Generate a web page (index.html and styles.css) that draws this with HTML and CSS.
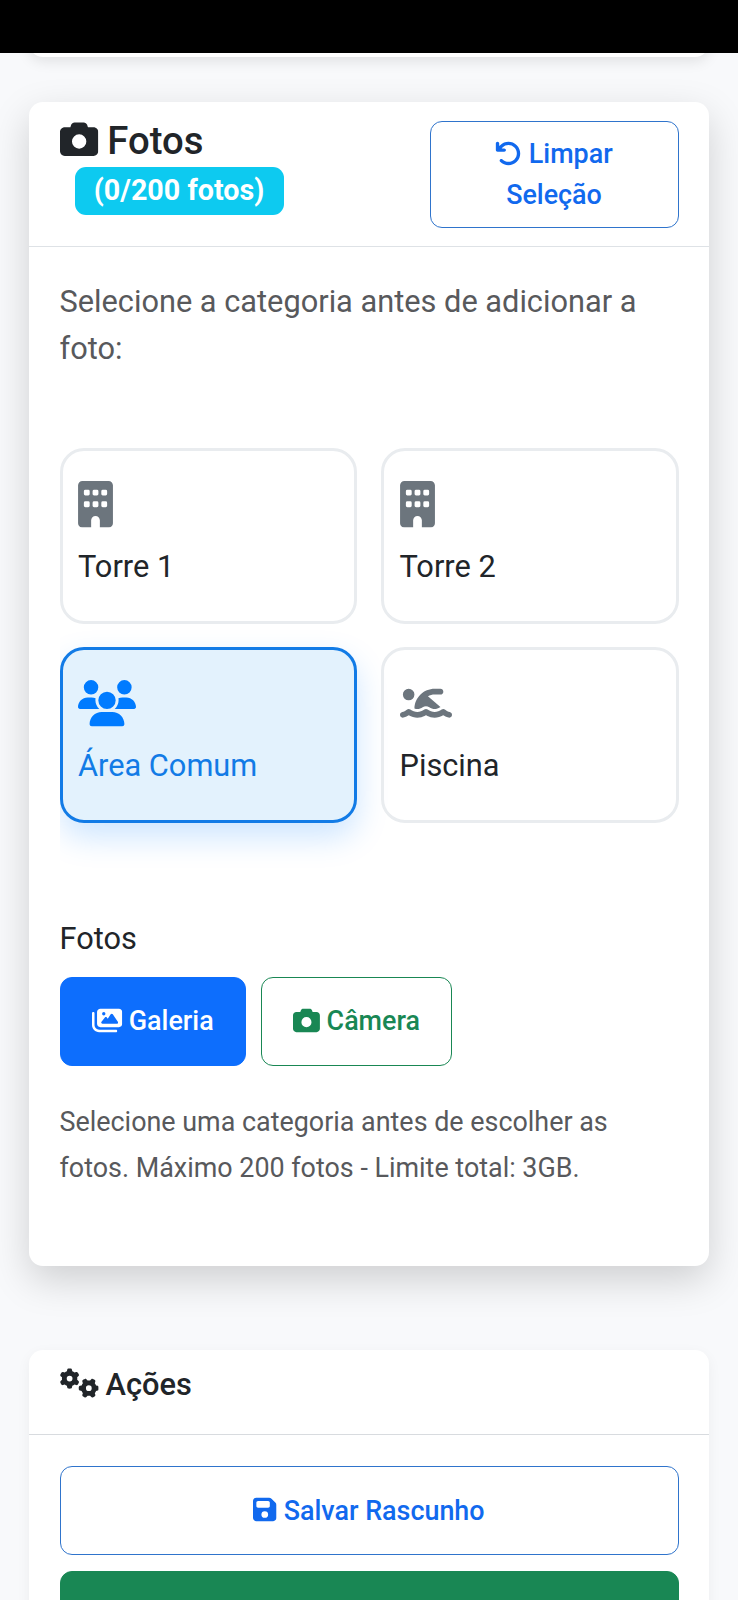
FILE: index.html
```html
<!DOCTYPE html>
<html lang="pt-BR">
<head>
<meta charset="utf-8">
<title>Fotos</title>
<link rel="stylesheet" href="styles.css">
</head>
<body>
<svg class="sprite" aria-hidden="true">
  <symbol id="camera" viewBox="0 0 512 512"><path d="M149.1 64.8L138.7 96H64C28.7 96 0 124.7 0 160V416c0 35.3 28.7 64 64 64H448c35.3 0 64-28.7 64-64V160c0-35.3-28.7-64-64-64H373.3L362.9 64.8C356.4 45.2 338.1 32 317.4 32H194.6c-20.7 0-39 13.2-45.5 32.8zM256 192a96 96 0 1 1 0 192 96 96 0 1 1 0-192z"/></symbol>
  <symbol id="undo" viewBox="0 0 512 512"><path d="M125.7 160H176c17.7 0 32 14.3 32 32s-14.3 32-32 32H48c-17.7 0-32-14.3-32-32V64c0-17.7 14.3-32 32-32s32 14.3 32 32v51.2L97.6 97.6c87.5-87.5 229.3-87.5 316.8 0s87.5 229.3 0 316.8s-229.3 87.5-316.8 0c-12.5-12.5-12.5-32.8 0-45.3s32.8-12.5 45.3 0c62.5 62.5 163.8 62.5 226.3 0s62.5-163.8 0-226.3s-163.8-62.5-226.3 0L125.7 160z"/></symbol>
  <symbol id="building" viewBox="0 0 384 512"><path fill-rule="evenodd" d="M48 0C21.500 0 0 21.500 0 48V464c0 26.500 21.500 48 48 48h96V432c0-26.500 21.500-48 48-48s48 21.500 48 48v80h96c26.500 0 48-21.500 48-48V48c0-26.500-21.500-48-48-48H48zM80 224h32q16 0 16 16v32q0 16-16 16H80q-16 0-16-16V240q0-16 16-16zM176 224h32q16 0 16 16v32q0 16-16 16H176q-16 0-16-16V240q0-16 16-16zM272 224h32q16 0 16 16v32q0 16-16 16H272q-16 0-16-16V240q0-16 16-16zM80 96h32q16 0 16 16v32q0 16-16 16H80q-16 0-16-16V112q0-16 16-16zM176 96h32q16 0 16 16v32q0 16-16 16H176q-16 0-16-16V112q0-16 16-16zM272 96h32q16 0 16 16v32q0 16-16 16H272q-16 0-16-16V112q0-16 16-16z"/></symbol>
  <symbol id="users" viewBox="0 0 640 512"><path d="M144 0a80 80 0 1 1 0 160A80 80 0 1 1 144 0zM512 0a80 80 0 1 1 0 160A80 80 0 1 1 512 0zM0 298.7C0 239.8 47.8 192 106.7 192h42.7c15.9 0 31 3.5 44.6 9.7c-1.3 7.2-1.9 14.7-1.9 22.3c0 38.2 16.8 72.5 43.3 96c-.2 0-.4 0-.7 0H21.300C9.600 320 0 310.400 0 298.700zM405.300 320c-.2 0-.4 0-.7 0c26.600-23.500 43.300-57.800 43.300-96c0-7.600-.7-15-1.900-22.300c13.600-6.300 28.700-9.700 44.600-9.700h42.700C592.200 192 640 239.800 640 298.700c0 11.800-9.600 21.300-21.300 21.300H405.300zM224 224a96 96 0 1 1 192 0 96 96 0 1 1 -192 0zM128 485.300C128 411.700 187.700 352 261.300 352H378.700C452.300 352 512 411.700 512 485.300c0 14.700-11.900 26.700-26.700 26.700H154.700c-14.700 0-26.700-11.900-26.700-26.700z"/></symbol>
  <symbol id="swim" viewBox="0 0 576 512"><path d="M309.500 178.400L447.900 297.100c-1.600 .9-3.200 2-4.800 3c-18 12.400-40.100 20.300-59.200 20.300c-19.600 0-40.800-7.700-59.200-20.300c-22.100-15.500-51.600-15.500-73.700 0c-17.100 11.800-38 20.300-59.200 20.300c-10.100 0-21.100-2.200-31.900-6.200C163.100 193.200 262.200 96 384 96h64c17.700 0 32 14.300 32 32s-14.300 32-32 32H384c-26.900 0-52.300 6.600-74.500 18.400zM160 160A64 64 0 1 1 32 160a64 64 0 1 1 128 0zM306.500 325.900C329 341.400 356.500 352 384 352c26.900 0 55.400-10.800 77.400-26.100l0 0c11.900-8.500 28.100-7.800 39.200 1.700c14.400 11.900 32.500 21 50.600 25.200c17.200 4 27.900 21.200 23.900 38.400s-21.200 27.900-38.400 23.900c-24.500-5.700-44.900-16.500-58.200-25C449.500 405.700 417 416 384 416c-31.900 0-60.600-9.900-80.400-18.900c-5.800-2.700-11.100-5.300-15.600-7.700c-4.500 2.400-9.700 5.100-15.600 7.700c-19.800 9-48.500 18.900-80.400 18.900c-33 0-65.500-10.300-94.500-25.800c-13.400 8.400-33.700 19.300-58.200 25c-17.200 4-34.400-6.700-38.400-23.900s6.700-34.400 23.900-38.400c18.100-4.200 36.200-13.300 50.600-25.200c11.100-9.400 27.300-10.100 39.200-1.700l0 0C136.700 341.200 165.100 352 192 352c27.500 0 55-10.600 77.500-26.100c11.100-7.900 25.900-7.900 37 0z"/></symbol>
  <symbol id="images" viewBox="0 0 576 512"><path d="M160 32c-35.300 0-64 28.700-64 64V320c0 35.300 28.700 64 64 64H512c35.300 0 64-28.700 64-64V96c0-35.300-28.700-64-64-64H160zM396 138.700l96 144c4.900 7.400 5.400 16.800 1.200 24.600S480.900 320 472 320H328 280 200c-9.200 0-17.600-5.300-21.600-13.600s-2.900-18.200 2.900-25.400l64-80c4.600-5.700 11.400-9 18.700-9s14.200 3.300 18.700 9l17.300 21.600 56-84C360.500 132 368 128 376 128s15.500 4 20 10.700zM192 128a32 32 0 1 1 64 0 32 32 0 1 1 -64 0zM48 120c0-13.300-10.700-24-24-24S0 106.700 0 120V344c0 75.100 60.900 136 136 136H456c13.300 0 24-10.700 24-24s-10.700-24-24-24H136c-48.600 0-88-39.400-88-88V120z"/></symbol>
  <symbol id="save" viewBox="0 0 448 512"><path d="M64 32C28.700 32 0 60.700 0 96V416c0 35.300 28.700 64 64 64H384c35.300 0 64-28.700 64-64V173.300c0-17-6.700-33.300-18.700-45.300L352 50.700C340 38.700 323.700 32 306.700 32H64zm0 96c0-17.700 14.300-32 32-32H288c17.700 0 32 14.300 32 32v64c0 17.700-14.300 32-32 32H96c-17.700 0-32-14.300-32-32V128zM224 288a64 64 0 1 1 0 128 64 64 0 1 1 0-128z"/></symbol>
  <symbol id="gears" viewBox="0 0 640 512">
    <path id="gear" d="M308.500 135.300c7.100-6.300 9.900-16.200 6.200-25c-2.300-5.300-4.800-10.500-7.600-15.500L304 89.400c-3-5-6.300-9.900-9.800-14.600c-5.700-7.600-15.700-10.100-24.700-7.100l-28.200 9.300c-10.700-8.800-23-16-36.200-20.900L199 27.100c-1.900-9.300-9.100-16.700-18.500-17.800C173.900 8.400 167.200 8 160.400 8h-.7c-6.800 0-13.500 .4-20.100 1.200c-9.400 1.100-16.600 8.600-18.500 17.800L115 56.100c-13.300 5-25.500 12.100-36.200 20.900L50.500 67.800c-9-3-19-.5-24.700 7.100c-3.500 4.700-6.800 9.600-9.900 14.600l-3 5.300c-2.800 5-5.300 10.200-7.600 15.600c-3.700 8.700-.9 18.600 6.200 25l22.200 19.800C32.600 161.900 32 168.900 32 176s.6 14.100 1.700 20.900L11.500 216.700c-7.100 6.300-9.900 16.200-6.200 25c2.300 5.300 4.800 10.500 7.600 15.600l3 5.200c3 5.100 6.300 9.900 9.900 14.600c5.700 7.600 15.700 10.100 24.700 7.100l28.200-9.300c10.700 8.800 23 16 36.200 20.900l6.100 29.100c1.900 9.300 9.100 16.700 18.500 17.800c6.700 .8 13.500 1.200 20.400 1.200s13.700-.4 20.400-1.200c9.400-1.100 16.600-8.600 18.500-17.800l6.100-29.100c13.300-5 25.500-12.100 36.200-20.900l28.200 9.300c9 3 19 .5 24.700-7.100c3.500-4.700 6.800-9.500 9.800-14.600l3.100-5.400c2.800-5 5.300-10.200 7.600-15.500c3.700-8.700 .9-18.600-6.200-25l-22.200-19.800c1.100-6.800 1.700-13.800 1.700-20.900s-.6-14.100-1.700-20.900l22.200-19.800zM112 176a48 48 0 1 1 96 0 48 48 0 1 1 -96 0z"/>
    <use href="#gear" transform="translate(480 336) rotate(90) translate(-160 -176)"/>
  </symbol>
</svg>
<div class="screen">
  <div class="statusbar"></div>
  <div class="card-tail"></div>
  <section class="card card-raised">
    <header class="card-header">
      <h5 class="title"><svg class="icon sq"><use href="#camera"/></svg> Fotos <span class="badge">(0/200 fotos)</span></h5>
      <button class="btn btn-blue btn-clear"><svg class="icon sq"><use href="#undo"/></svg> Limpar Seleção</button>
    </header>
    <div class="card-body">
      <p class="lead">Selecione a categoria antes de adicionar a foto:</p>
      <div class="tiles">
        <div class="tile"><svg class="tile-icon w384"><use href="#building"/></svg><span>Torre 1</span></div>
        <div class="tile"><svg class="tile-icon w384"><use href="#building"/></svg><span>Torre 2</span></div>
        <div class="tile selected"><svg class="tile-icon w640"><use href="#users"/></svg><span>Área Comum</span></div>
        <div class="tile"><svg class="tile-icon w576"><use href="#swim"/></svg><span>Piscina</span></div>
      </div>
      <div class="label">Fotos</div>
      <div class="btn-row">
        <button class="btn btn-primary btn-gallery"><svg class="icon w576"><use href="#images"/></svg> Galeria</button>
        <button class="btn btn-green btn-camera"><svg class="icon sq"><use href="#camera"/></svg> Câmera</button>
      </div>
      <p class="help">Selecione uma categoria antes de escolher as fotos. Máximo 200 fotos - Limite total: 3GB.</p>
    </div>
  </section>
  <section class="card card-actions">
    <header class="actions-header"><svg class="icon w640"><use href="#gears"/></svg> Ações</header>
    <div class="actions-body">
      <button class="btn btn-blue"><svg class="icon w448"><use href="#save"/></svg> Salvar Rascunho</button>
      <button class="btn btn-success" aria-label="Enviar"></button>
    </div>
  </section>
</div>
</body>
</html>
```
FILE: styles.css
```css
* { box-sizing: border-box; }
body {
  margin: 0;
  background: #f8f9fb;
  color: #212529;
  font: 400 30.750px/46.500px Roboto, "Noto Sans", sans-serif;
}
.sprite { position: absolute; width: 0; height: 0; }
.screen { height: 1600px; overflow: hidden; }
.statusbar { position: relative; z-index: 1; height: 52.500px; background: #000; }
.card-tail {
  height: 20px;
  margin: -15.500px 29px 45px;
  background: #fff;
  border-radius: 0 0 14px 14px;
  box-shadow: 0 4px 14px rgba(0, 0, 0, .1);
}
.card { margin: 0 29px; background: #fff; border-radius: 14px; }
.card-raised { position: relative; height: 1164px; box-shadow: 0 14px 38px rgba(0, 0, 0, .17); }
.card-header {
  display: flex;
  justify-content: space-between;
  align-items: flex-start;
  height: 145px;
  padding: 19px 30.500px 0;
  border-bottom: 1.500px solid #dee2e6;
}
.title { margin: -3px 0 0; width: 300px; font-size: 38.300px; line-height: 46.500px; font-weight: 500; }
.icon { display: inline-block; height: 1em; fill: currentColor; vertical-align: -.125em; overflow: visible; }
.icon.sq { width: 1em; }
.icon.w576 { width: 1.125em; }
.icon.w640 { width: 1.25em; }
.icon.w448 { width: .875em; }
.badge {
  display: block;
  width: 209px;
  height: 48px;
  margin: 2px 0 0 15px;
  border-radius: 11px;
  background: #0dcaf0;
  color: #fff;
  font-size: 28.700px;
  line-height: 46px;
  font-weight: 700;
  text-align: center;
}
.btn {
  display: block;
  padding: 1px 0 0;
  border: 1.500px solid;
  border-radius: 12px;
  background: transparent;
  font-family: inherit;
  font-size: 26.900px;
  line-height: 40.600px;
  font-weight: 500;
  text-align: center;
}
.btn-blue { color: #1169ee; border-color: #2f74cc; }
.btn-clear { width: 249px; height: 107px; padding: 1px 40px 0; }
.btn-primary { background: #0d6efd; border-color: #0d6efd; color: #fff; }
.btn-green { color: #198754; }
.btn-success { background: #198754; border-color: #198754; }
.card-body { padding: 32px 30.500px 0; }
.lead { margin: 0; height: 154px; color: #58595c; }
.tiles {
  display: grid;
  grid-template-columns: 1fr 1fr;
  grid-auto-rows: 176px;
  gap: 23px 24px;
  height: 445px;
  padding: 15px 0 0;
  overflow: hidden;
}
.tile { display: flex; flex-direction: column; padding: 30px 15.500px 0; border: 3px solid #e9ecef; border-radius: 24px; }
.tile-icon { height: 46.500px; margin-bottom: 16px; fill: #6c757d; }
.tile-icon.w384 { width: 35px; }
.tile-icon.w576 { width: 52px; }
.tile-icon.w640 { width: 58px; }
.tile.selected {
  background: #e3f2fd;
  border-color: #127be6;
  color: #127be6;
  box-shadow: 0 14px 32px rgba(0, 123, 255, .2);
}
.tile.selected .tile-icon { fill: #007bff; }
.label { margin-top: 38px; }
.btn-row { display: flex; gap: 15px; margin-top: 14px; }
.btn-row .btn { height: 89px; }
.btn-gallery { width: 186.500px; }
.btn-camera { width: 191px; }
.help { margin: 33px 0 0; font-size: 26.900px; color: #58595c; }
.card-actions { margin-top: 84px; height: 300px; box-shadow: 0 4px 14px rgba(0, 0, 0, .05); }
.actions-header { height: 85px; padding: 12px 30.500px 0; border-bottom: 1px solid #d8dbdf; font-weight: 500; }
.actions-body { display: grid; gap: 16px; padding: 31px 30.500px 0; }
.actions-body .btn { height: 89px; }
```
